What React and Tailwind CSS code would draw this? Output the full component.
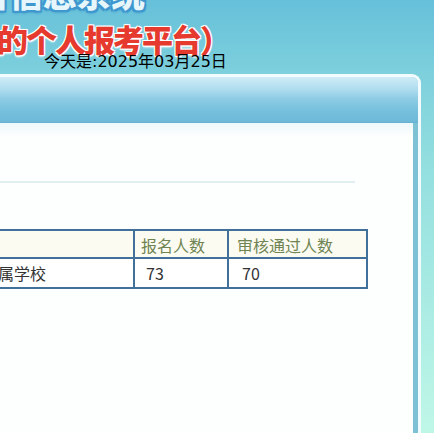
export default function App() {
  return (
    <div className="w-[434px] h-[433px] overflow-hidden flex flex-col bg-[linear-gradient(180deg,#66c0da_0px,#7ccfdc_70px,#92dedf_160px,#bff7e7_433px)] font-['DejaVu_Sans','Noto_Sans_CJK_SC',sans-serif]">
      {/* banner */}
      <div className="h-[74px] shrink-0 flex flex-col">
        <div className="mt-[-24px] ml-[-59px] h-[34px] leading-[34px] text-[34px] font-black whitespace-nowrap text-[#e6f6fb] font-['Noto_Sans_CJK_SC',sans-serif] [text-shadow:0_0_1px_#3f97cf,2px_2px_0_#3f97cf,-2px_-2px_0_#3f97cf,2px_-2px_0_#3f97cf,-2px_2px_0_#3f97cf,0_2px_3px_#2f86bf]">
          报名信息系统
        </div>
        <div className="mt-[11px] ml-[-3px] h-[36px] leading-[36px] text-[31px] tracking-[-2px] font-black whitespace-nowrap text-[#e63a2e] font-['Noto_Sans_CJK_SC',sans-serif] [text-shadow:0_0_2px_#fff,1px_1px_0_#fff,-1px_-1px_0_#fff,1px_-1px_0_#fff,-1px_1px_0_#fff,0_2px_2px_rgba(255,255,255,0.8)]">
          的个人报考平台）
        </div>
        <div className="mt-[-4px] ml-[44px] text-[16px] leading-[18px] text-black whitespace-nowrap">
          今天是:2025年03月25日
        </div>
      </div>
      {/* panel */}
      <div className="mr-[13px] flex-1 flex flex-col border-t-[3px] border-r-[3px] border-[#f2fbfd] rounded-tr-[9px]">
        <div className="h-[46px] shrink-0 rounded-tr-[6px] bg-[linear-gradient(180deg,#cfecf7_0%,#b2def0_25%,#8ccbe4_50%,#76c0dd_75%,#6db9d8_100%)] border-b border-[#69b2d2]" />
        <div className="flex-1 flex flex-col border-r-[5px] border-[#7cc2d4] bg-[linear-gradient(180deg,#eef9fb_0px,#fdfefe_14px,#fdfefe_100%)]">
          <div className="mt-[58px] h-[2px] w-[355px] bg-[#e2eff0]" />
          <div className="mt-[46px] ml-[-112px] w-[480px] border-2 border-[#41709a] font-['Noto_Sans_CJK_SC',sans-serif] text-[16px]">
            <div className="flex h-[28px] bg-[#fbfbf1] border-b-2 border-[#41709a] text-[#6f8452]">
              <div className="w-[245px] border-r-2 border-[#41709a]" />
              <div className="w-[94px] border-r-2 border-[#41709a] pl-[6px] leading-[28px]">报名人数</div>
              <div className="flex-1 pl-[8px] leading-[28px]">审核通过人数</div>
            </div>
            <div className="flex h-[28px] bg-white text-[#333]">
              <div className="w-[245px] border-r-2 border-[#41709a] pl-[28px] leading-[28px] whitespace-nowrap">师范大学附属学校</div>
              <div className="w-[94px] border-r-2 border-[#41709a] pl-[11px] leading-[28px]">73</div>
              <div className="flex-1 pl-[13px] leading-[28px]">70</div>
            </div>
          </div>
        </div>
      </div>
    </div>
  );
}
